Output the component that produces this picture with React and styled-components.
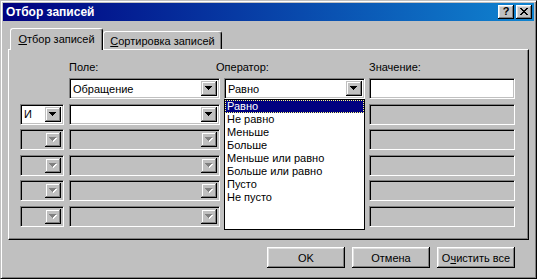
import React from "react";
import styled, { createGlobalStyle } from "styled-components";

const GlobalStyle = createGlobalStyle`
  html, body {
    margin: 0;
    padding: 0;
    background: #c0c0c0;
  }
  body {
    font-family: "Liberation Sans", Arial, sans-serif;
    font-size: 11px;
    color: #000;
  }
`;

const Window = styled.div`
  width: 537px;
  height: 279px;
  box-sizing: border-box;
  border: 1px solid;
  border-color: #c0c0c0 #000 #000 #c0c0c0;
  box-shadow: inset 1px 1px #fff, inset -1px -1px #808080;
  padding: 2px;
  display: flex;
  flex-direction: column;
  background: #c0c0c0;
`;

const TitleBar = styled.div`
  height: 18px;
  flex: none;
  display: flex;
  align-items: center;
  padding: 0 2px 0 3px;
  background: linear-gradient(to right, #000080, #1084d0);
  color: #fff;
  font-weight: bold;
  font-size: 12px;
`;

const CaptionButtons = styled.div`
  margin-left: auto;
  display: flex;
  gap: 2px;
`;

const CaptionButton = styled.div`
  width: 16px;
  height: 14px;
  box-sizing: border-box;
  background: #c0c0c0;
  box-shadow: inset -1px -1px #000, inset 1px 1px #fff, inset -2px -2px #808080,
    inset 2px 2px #dfdfdf;
  display: flex;
  align-items: center;
  justify-content: center;
  color: #000;
  font-weight: bold;
  font-size: 11px;
  line-height: 1;
  padding-bottom: 1px;
`;

const Body = styled.div`
  flex: 1;
  display: flex;
  flex-direction: column;
  padding: 7px 5px 0 5px;
`;

const TabRow = styled.div`
  height: 21px;
  display: flex;
  align-items: flex-end;
  padding-left: 2px;
  position: relative;
  z-index: 1;
`;

const Tab = styled.div`
  width: ${(p) => p.$width}px;
  height: ${(p) => (p.$active ? 22 : 18)}px;
  margin-bottom: ${(p) => (p.$active ? -1 : 0)}px;
  box-sizing: border-box;
  border-top: 1px solid #fff;
  border-left: 1px solid #fff;
  border-right: 1px solid #000;
  border-radius: 3px 3px 0 0;
  box-shadow: inset -1px 0 #808080;
  background: #c0c0c0;
  display: flex;
  align-items: center;
  justify-content: center;
  padding-bottom: ${(p) => (p.$active ? 2 : 0)}px;
  white-space: nowrap;
`;

const Panel = styled.div`
  height: 191px;
  flex: none;
  box-sizing: border-box;
  border: 1px solid;
  border-color: #fff #000 #000 #fff;
  box-shadow: inset -1px -1px #808080;
  padding: 11px 0 0 11px;
`;

const Grid = styled.div`
  position: relative;
  display: grid;
  grid-template-columns: 45px 151px 141px 146px;
  column-gap: 4px;
`;

const Labels = styled(Grid)`
  height: 13px;
  margin-bottom: 4px;
`;

const Rows = styled(Grid)`
  grid-auto-rows: 21px;
  row-gap: 4.6px;
`;

const Label = styled.div`
  grid-column: ${(p) => p.$col};
  margin-left: ${(p) => p.$shift || 0}px;
  line-height: 13px;
  white-space: nowrap;
`;

const Field = styled.div`
  grid-column: ${(p) => p.$col};
  width: ${(p) => (p.$width ? `${p.$width}px` : "auto")};
  height: 21px;
  box-sizing: border-box;
  border: 1px solid;
  border-color: #808080 #fff #fff #808080;
  box-shadow: inset 1px 1px #000, inset -1px -1px #c0c0c0;
  background: ${(p) => (p.$disabled ? "#c0c0c0" : "#fff")};
  padding: 2px;
  display: flex;
  position: relative;
`;

const FieldText = styled.div`
  flex: 1;
  padding-left: 1px;
  display: flex;
  align-items: center;
  white-space: nowrap;
  overflow: hidden;
`;

const DropButton = styled.div`
  width: 16px;
  flex: none;
  box-sizing: border-box;
  background: #c0c0c0;
  box-shadow: inset -1px -1px #000, inset 1px 1px #c0c0c0, inset -2px -2px #808080,
    inset 2px 2px #fff;
  display: flex;
  align-items: center;
  justify-content: center;
`;

const DropList = styled.div`
  position: absolute;
  top: 20px;
  left: -1px;
  width: 141px;
  height: 131px;
  box-sizing: border-box;
  border: 1px solid #000;
  background: #fff;
  padding: 0;
  z-index: 2;
`;

const ListItem = styled.div`
  height: 13px;
  line-height: 13px;
  padding-left: 2px;
  box-sizing: border-box;
  white-space: nowrap;
  background: ${(p) => (p.$selected ? "#000080" : "transparent")};
  color: ${(p) => (p.$selected ? "#fff" : "#000")};
  outline: ${(p) => (p.$selected ? "1px dotted #ffff80" : "none")};
  outline-offset: -1px;
`;

const Footer = styled.div`
  display: flex;
  justify-content: flex-end;
  gap: 7px;
  padding: 7px 14px 0 0;
`;

const Button = styled.div`
  width: 78px;
  height: 21px;
  box-sizing: border-box;
  background: #c0c0c0;
  box-shadow: inset -1px -1px #000, inset 1px 1px #fff, inset -2px -2px #808080,
    inset 2px 2px #dfdfdf;
  display: flex;
  align-items: center;
  justify-content: center;
  white-space: nowrap;
`;

function Arrow({ disabled }) {
  const rows = [
    [0, 7],
    [1, 5],
    [2, 3],
    [3, 1],
  ];
  return (
    <svg width="8" height="5" shapeRendering="crispEdges">
      {disabled &&
        rows.map(([x, w], i) => (
          <rect key={"s" + i} x={x + 1} y={i + 1} width={w} height="1" fill="#fff" />
        ))}
      {rows.map(([x, w], i) => (
        <rect key={i} x={x} y={i} width={w} height="1" fill={disabled ? "#808080" : "#000"} />
      ))}
    </svg>
  );
}

function CloseGlyph() {
  return (
    <svg width="8" height="7" shapeRendering="crispEdges">
      <path d="M0 0h2v1H0zM6 0h2v1H6zM1 1h2v1H1zM5 1h2v1H5zM2 2h4v1H2zM3 3h2v1H3zM2 4h4v1H2zM1 5h2v1H1zM5 5h2v1H5zM0 6h2v1H0zM6 6h2v1H6z" fill="#000" />
    </svg>
  );
}

function Combo({ col, width, text, disabled, children }) {
  return (
    <Field $col={col} $width={width} $disabled={disabled}>
      <FieldText>{text}</FieldText>
      <DropButton>
        <Arrow disabled={disabled} />
      </DropButton>
      {children}
    </Field>
  );
}

const operators = [
  "Равно",
  "Не равно",
  "Меньше",
  "Больше",
  "Меньше или равно",
  "Больше или равно",
  "Пусто",
  "Не пусто",
];

export default function App() {
  const disabledRows = [0, 1, 2, 3];

  return (
    <>
      <GlobalStyle />
      <Window>
        <TitleBar>
          <span>Отбор записей</span>
          <CaptionButtons>
            <CaptionButton>?</CaptionButton>
            <CaptionButton>
              <CloseGlyph />
            </CaptionButton>
          </CaptionButtons>
        </TitleBar>
        <Body>
          <TabRow>
            <Tab $active $width={93}>
              <span>
                <u>О</u>тбор записей
              </span>
            </Tab>
            <Tab $width={119}>
              <span>
                <u>С</u>ортировка записей
              </span>
            </Tab>
          </TabRow>
          <Panel>
            <Labels>
              <Label $col={2}>Поле:</Label>
              <Label $col={3} $shift={-8}>
                Оператор:
              </Label>
              <Label $col={4}>Значение:</Label>
            </Labels>
            <Rows>
              <Combo col={2} text="Обращение" />
              <Combo col={3} text="Равно">
                <DropList>
                  {operators.map((op, i) => (
                    <ListItem key={op} $selected={i === 0}>
                      {op}
                    </ListItem>
                  ))}
                </DropList>
              </Combo>
              <Field $col={4} />

              <Combo col={1} width={44} text="И" />
              <Combo col={2} />
              <Field $col={4} $disabled />

              {disabledRows.map((r) => (
                <React.Fragment key={r}>
                  <Combo col={1} width={44} disabled />
                  <Combo col={2} disabled />
                  <Field $col={4} $disabled />
                </React.Fragment>
              ))}
            </Rows>
          </Panel>
          <Footer>
            <Button>OK</Button>
            <Button>Отмена</Button>
            <Button>
              <span>
                О<u>ч</u>истить все
              </span>
            </Button>
          </Footer>
        </Body>
      </Window>
    </>
  );
}
